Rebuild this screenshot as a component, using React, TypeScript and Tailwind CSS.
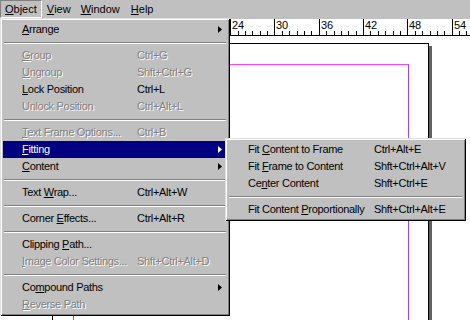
import type { ReactNode } from "react";

type Entry =
  | "sep"
  | {
      text: string;
      m?: number; // index of the mnemonic letter
      shortcut?: string;
      disabled?: boolean;
      sub?: boolean;
      active?: boolean;
    };

const OBJECT_MENU: Entry[] = [
  { text: "Arrange", m: 0, sub: true },
  "sep",
  { text: "Group", m: 0, shortcut: "Ctrl+G", disabled: true },
  { text: "Ungroup", m: 0, shortcut: "Shft+Ctrl+G", disabled: true },
  { text: "Lock Position", m: 0, shortcut: "Ctrl+L" },
  { text: "Unlock Position", shortcut: "Ctrl+Alt+L", disabled: true },
  "sep",
  { text: "Text Frame Options...", m: 0, shortcut: "Ctrl+B", disabled: true },
  { text: "Fitting", m: 0, sub: true, active: true },
  { text: "Content", m: 0, sub: true },
  "sep",
  { text: "Text Wrap...", m: 5, shortcut: "Ctrl+Alt+W" },
  "sep",
  { text: "Corner Effects...", m: 7, shortcut: "Ctrl+Alt+R" },
  "sep",
  { text: "Clipping Path...", m: 9 },
  { text: "Image Color Settings...", m: 0, shortcut: "Shft+Ctrl+Alt+D", disabled: true },
  "sep",
  { text: "Compound Paths", m: 2, sub: true },
  { text: "Reverse Path", m: 0, disabled: true },
];

const FITTING_MENU: Entry[] = [
  { text: "Fit Content to Frame", m: 4, shortcut: "Ctrl+Alt+E" },
  { text: "Fit Frame to Content", m: 4, shortcut: "Shft+Ctrl+Alt+V" },
  { text: "Center Content", m: 2, shortcut: "Shft+Ctrl+E" },
  "sep",
  { text: "Fit Content Proportionally", m: 12, shortcut: "Shft+Ctrl+Alt+E" },
];

const UNIT = 7.383;
const ZERO = 53;

function Mnemonic({ text, m }: { text: string; m?: number }) {
  if (m === undefined) return <>{text}</>;
  return (
    <>
      {text.slice(0, m)}
      <u className="underline-offset-[1px]">{text[m]}</u>
      {text.slice(m + 1)}
    </>
  );
}

function Arrow({ white }: { white?: boolean }) {
  return (
    <svg width="4" height="7" viewBox="0 0 4 7" className="ml-auto mr-[5px] shrink-0">
      <polygon points="0,0 4,3.5 0,7" fill={white ? "#ffffff" : "#000000"} />
    </svg>
  );
}

function Menu({
  entries,
  labelWidth,
  padLeft,
  className,
}: {
  entries: Entry[];
  labelWidth: string;
  padLeft: string;
  className: string;
}) {
  return (
    <div
      className={`absolute bg-[#c0c0c0] p-[3px] tracking-[-0.3px] shadow-[inset_1px_1px_0_#dfdfdf,inset_-1px_-1px_0_#000000,inset_2px_2px_0_#ffffff,inset_-2px_-2px_0_#808080] ${className}`}
    >
      {entries.map((e, i) => {
        if (e === "sep") {
          return (
            <div key={i} className="flex h-[9px] flex-col justify-center px-px">
              <div className="h-[2px] border-t border-b border-t-[#808080] border-b-white" />
            </div>
          );
        }
        const tone = e.active
          ? "bg-[#000080] text-white"
          : e.disabled
            ? "text-[#808080] [text-shadow:1px_1px_0_#ffffff]"
            : "text-black";
        return (
          <div key={i} className={`flex h-[17px] items-center whitespace-nowrap ${padLeft} ${tone}`}>
            <span className={`shrink-0 ${labelWidth}`}>
              <Mnemonic text={e.text} m={e.m} />
            </span>
            {e.shortcut && <span>{e.shortcut}</span>}
            {e.sub && <Arrow white={e.active} />}
          </div>
        );
      })}
    </div>
  );
}

function Ruler() {
  const ticks: ReactNode[] = [];
  for (let u = 0; u <= 56; u++) {
    const x = Math.round(ZERO + u * UNIT) + 0.5;
    if (u % 6 === 0) {
      ticks.push(<line key={`l${u}`} x1={x} y1={0} x2={x} y2={16} stroke="#000" />);
      // labels left of x=229 sit under the open menu anyway
      if (u >= 24) {
        ticks.push(
          <text key={`t${u}`} x={x + 1.5} y={10} fontSize="11" fill="#000" fontFamily="Liberation Sans, Arial, sans-serif">
            {u}
          </text>
        );
      }
    } else {
      ticks.push(<line key={`l${u}`} x1={x} y1={12} x2={x} y2={16} stroke="#000" />);
    }
  }
  return (
    <div className="h-[17px] border-b border-black bg-white">
      <svg width="470" height="16" shapeRendering="crispEdges" className="block">
        {ticks}
      </svg>
    </div>
  );
}

export default function App() {
  return (
    <div className="relative flex h-[320px] w-[470px] flex-col overflow-hidden bg-white text-[11px] leading-none text-black [font-family:'Liberation_Sans',Arial,sans-serif]">
      {/* Menu bar */}
      <div className="flex h-[19px] shrink-0 items-start bg-[#c0c0c0]">
        <div className="flex h-[18px] items-center border border-t-[#808080] border-l-[#808080] border-r-white border-b-white px-[4px]">
          <Mnemonic text="Object" m={0} />
        </div>
        <div className="flex h-[18px] items-center border border-transparent px-[4px]">
          <Mnemonic text="View" m={0} />
        </div>
        <div className="flex h-[18px] items-center border border-transparent px-[4px]">
          <Mnemonic text="Window" m={0} />
        </div>
        <div className="flex h-[18px] items-center border border-transparent px-[5px]">
          <Mnemonic text="Help" m={0} />
        </div>
      </div>

      <Ruler />

      {/* Canvas with page */}
      <div className="flex-1 bg-white">
        <div className="ml-[52px] mt-[7px] h-[400px] w-[377px] border-l border-r border-t border-black shadow-[3px_3px_0_#606060]">
          <div className="ml-[20px] mr-[19px] mt-[20px] h-[400px] border-l border-r border-t border-l-[#a040ff] border-r-[#a040ff] border-t-[#ff40ff]" />
        </div>
      </div>

      <Menu entries={OBJECT_MENU} labelWidth="w-[115px]" padLeft="pl-[19px]" className="left-0 top-[18px] w-[230px]" />
      <Menu entries={FITTING_MENU} labelWidth="w-[126px]" padLeft="pl-[20px]" className="left-[225px] top-[138px] w-[241px]" />
    </div>
  );
}
